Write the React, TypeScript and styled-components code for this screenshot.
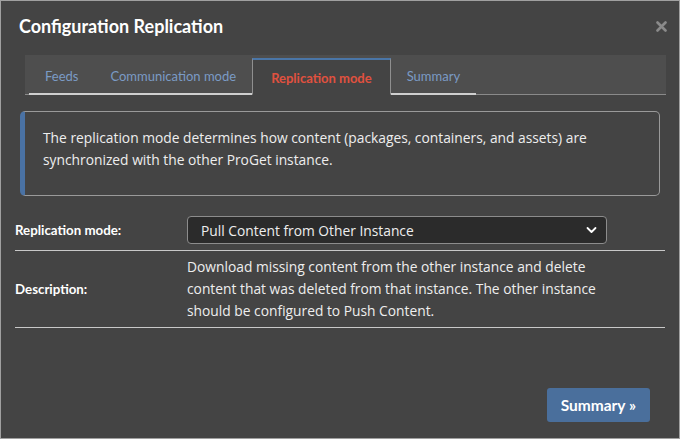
import React from "react";
import styled, { createGlobalStyle } from "styled-components";

const Global = createGlobalStyle`
  html, body { margin: 0; padding: 0; background: #444444; }
  * { box-sizing: border-box; }
  body { font-family: "Open Sans", "Noto Sans", sans-serif; color: #eeeeee; }
`;

const Window = styled.div`
  width: 680px;
  height: 439px;
  border: 1px solid #a0a0a0;
  background: #444444;
  display: flex;
  flex-direction: column;
`;

const Header = styled.div`
  display: flex;
  justify-content: space-between;
  align-items: flex-start;
  padding: 14px 12px 0 18px;
  height: 54px;
`;

const Title = styled.h1`
  margin: 0;
  font-family: Lato, "Open Sans", sans-serif;
  font-size: 18px;
  font-weight: 700;
  color: #ffffff;
  line-height: 22px;
`;

const Close = styled.button`
  background: none;
  border: none;
  padding: 0;
  margin-top: 6px;
  cursor: pointer;
  display: flex;
`;

const TabBar = styled.ul`
  list-style: none;
  margin: 0 13px 0 24px;
  padding: 3px 0 0 4px;
  display: flex;
  background: #4e4e4e;
  border-bottom: 1px solid #8a8a8a;
  height: 40px;
  font-family: Lato, "Open Sans", sans-serif;
`;

const Tab = styled.li<{ $active?: boolean }>`
  padding: 1px ${(p) => (p.$active ? "18px" : "16px")} 0;
  display: flex;
  align-items: center;
  font-size: 13px;
  margin-bottom: -1px;
  color: ${(p) => (p.$active ? "#e0513f" : "#7b9bc5")};
  font-weight: ${(p) => (p.$active ? 700 : 400)};
  background: ${(p) => (p.$active ? "#444444" : "transparent")};
  border: ${(p) => (p.$active ? "1px solid #8f8f8f" : "none")};
  border-top: ${(p) => (p.$active ? "2px solid #4a76a8" : "none")};
  border-bottom: ${(p) => (p.$active ? "1px solid #444444" : "2px solid #cfcfcf")};
`;

const Info = styled.div`
  margin: 16px 19px 0 19px;
  border: 1px solid #9a9a9a;
  border-left: 5px solid #4a72a4;
  border-radius: 5px;
  padding: 15px 18px 24px 18px;
  font-size: 13.8px;
  line-height: 22px;
  color: #eeeeee;
`;

const Form = styled.div`
  margin: 14px 14px 0 14px;
  display: flex;
  flex-direction: column;
`;

const Row = styled.div<{ $pad: string }>`
  display: grid;
  grid-template-columns: 172px 1fr;
  align-items: center;
  padding: ${(p) => p.$pad};
  border-bottom: 1px solid #c8c8c8;
`;

const Label = styled.div`
  font-family: Lato, "Open Sans", sans-serif;
  font-size: 13.3px;
  font-weight: 700;
  color: #ffffff;
`;

const SelectBox = styled.div`
  width: 420px;
  height: 28px;
  background: #2b2b2b;
  border: 1px solid #8c8c8c;
  border-radius: 4px;
  display: flex;
  align-items: center;
  justify-content: space-between;
  padding: 0 9px 0 13px;
  font-size: 13.8px;
  color: #eeeeee;
`;

const Desc = styled.div`
  max-width: 420px;
  font-size: 13.8px;
  line-height: 22px;
  color: #eeeeee;
`;

const Footer = styled.div`
  margin-top: auto;
  display: flex;
  justify-content: flex-end;
  padding: 0 29px 16px 0;
`;

const Button = styled.button`
  background: #4a6f9c;
  color: #ffffff;
  border: none;
  border-radius: 3px;
  height: 34px;
  padding: 0 14px;
  font-family: Lato, "Open Sans", sans-serif;
  font-size: 15.5px;
  font-weight: 700;
  cursor: pointer;
`;

export default function App() {
  return (
    <>
      <Global />
      <Window>
        <Header>
          <Title>Configuration Replication</Title>
          <Close aria-label="close">
            <svg width="11" height="11" viewBox="0 0 11 11">
              <path d="M1.5 1.5 L9.5 9.5 M9.5 1.5 L1.5 9.5" stroke="#8a8a8a" strokeWidth="2.6" strokeLinecap="round" />
            </svg>
          </Close>
        </Header>
        <TabBar>
          <Tab>Feeds</Tab>
          <Tab>Communication mode</Tab>
          <Tab $active>Replication mode</Tab>
          <Tab>Summary</Tab>
        </TabBar>
        <Info>
          The replication mode determines how content (packages, containers, and assets) are synchronized with the other ProGet instance.
        </Info>
        <Form>
          <Row $pad="6px 0 6px 0">
            <Label>Replication mode:</Label>
            <SelectBox>
              <span>Pull Content from Other Instance</span>
              <svg width="11" height="8" viewBox="0 0 11 8">
                <path d="M1.5 2 L5.5 6 L9.5 2" stroke="#ffffff" strokeWidth="1.8" fill="none" strokeLinecap="round" strokeLinejoin="round" />
              </svg>
            </SelectBox>
          </Row>
          <Row $pad="5px 0 5px 0">
            <Label>Description:</Label>
            <Desc>
              Download missing content from the other instance and delete content that was deleted from that instance. The other instance should be configured to Push Content.
            </Desc>
          </Row>
        </Form>
        <Footer>
          <Button>Summary »</Button>
        </Footer>
      </Window>
    </>
  );
}
